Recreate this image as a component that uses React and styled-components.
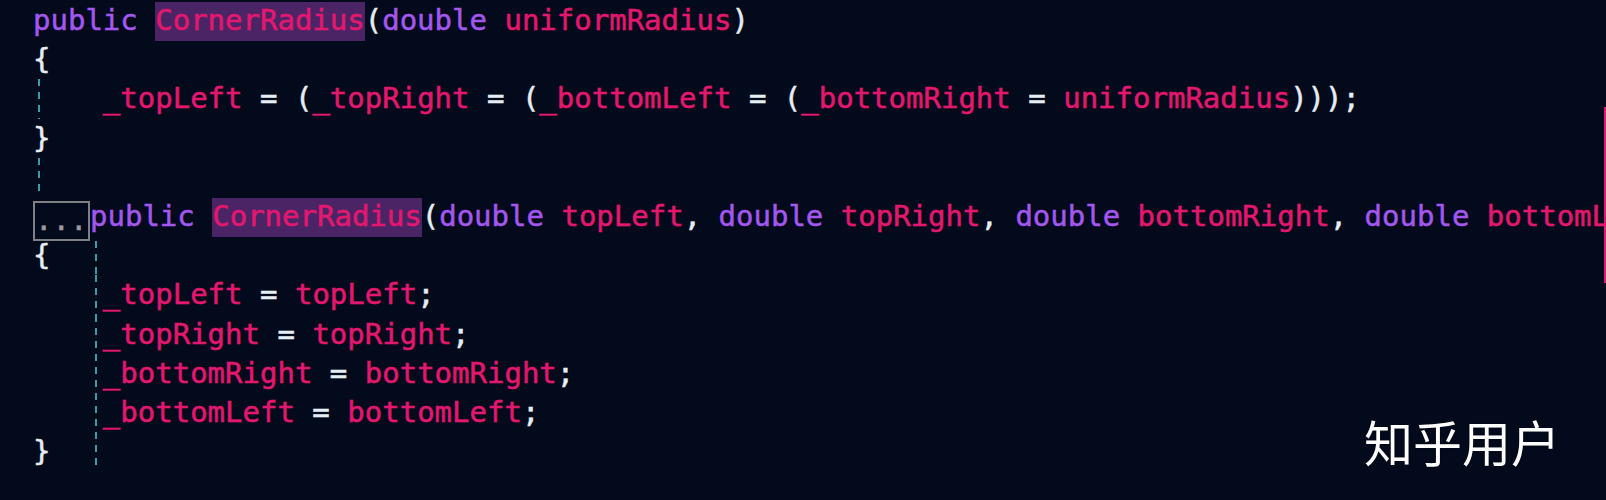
import React from "react";
import styled, { createGlobalStyle, css } from "styled-components";

const Global = createGlobalStyle`
  html, body { margin: 0; padding: 0; background: #030a1c; }
  #root { width: 1606px; height: 500px; }
`;

const LINE_H = 39.2;

const Editor = styled.div`
  position: relative;
  width: 1606px;
  height: 500px;
  overflow: hidden;
  background: #030a1c;
  box-sizing: border-box;
  padding: 1px 0 0 33px;
`;

const Code = styled.div`
  font-family: "DejaVu Sans Mono", "Liberation Mono", monospace;
  font-size: 29px;
  color: #e6eef3;
  -webkit-text-stroke: 0.5px currentColor;
`;

const guideCss = (left, top) => css`
  &::before {
    content: "";
    position: absolute;
    left: ${left}px;
    top: ${top}px;
    bottom: 0;
    width: 2px;
    background: repeating-linear-gradient(
      to bottom,
      #3a9ca8 0 7px,
      transparent 7px 13.07px
    );
  }
`;

const Line = styled.div`
  position: relative;
  height: ${LINE_H}px;
  line-height: ${LINE_H}px;
  white-space: pre;
  ${(p) => p.$guide === "outer" && guideCss(5, 0)}
  ${(p) => p.$guide === "inner" && guideCss(62, p.$guideTop || 0)}
`;

const Tok = styled.span`
  color: ${(p) =>
    p.$k === "kw" ? "#a457f0" : p.$k === "id" || p.$k === "hl" ? "#e4176f" : "#e6eef3"};
  ${(p) =>
    p.$k === "hl" &&
    css`
      background: #4b2466;
      padding: 1px 0 4px;
    `}
`;

const FoldBox = styled.span`
  display: inline-block;
  vertical-align: top;
  box-sizing: border-box;
  width: 57px;
  height: 40px;
  margin-top: 4px;
  border: 2px solid #7f7f86;
  color: #9a9aa0;
  line-height: 35px;
  overflow: hidden;
`;

const EdgeMark = styled.div`
  position: absolute;
  right: 0;
  top: 107px;
  width: 2px;
  height: 176px;
  background: #e0187a;
`;

const Watermark = styled.div`
  position: absolute;
  left: 1364px;
  top: 411px;
  font-family: "Noto Sans CJK SC", "Noto Sans", sans-serif;
  font-size: 49px;
  font-weight: 400;
  line-height: 60px;
  color: #ffffff;
  text-shadow: 0 0 2px rgba(0, 0, 0, 0.6);
`;

const lines = [
  {
    toks: [
      ["kw", "public "],
      ["hl", "CornerRadius"],
      ["p", "("],
      ["kw", "double "],
      ["id", "uniformRadius"],
      ["p", ")"],
    ],
  },
  { toks: [["p", "{"]] },
  {
    guide: "outer",
    toks: [
      ["p", "    "],
      ["id", "_topLeft"],
      ["p", " = ("],
      ["id", "_topRight"],
      ["p", " = ("],
      ["id", "_bottomLeft"],
      ["p", " = ("],
      ["id", "_bottomRight"],
      ["p", " = "],
      ["id", "uniformRadius"],
      ["p", ")));"],
    ],
  },
  { toks: [["p", "}"]] },
  { guide: "outer", toks: [["p", " "]] },
  {
    fold: true,
    toks: [
      ["kw", "public "],
      ["hl", "CornerRadius"],
      ["p", "("],
      ["kw", "double "],
      ["id", "topLeft"],
      ["p", ", "],
      ["kw", "double "],
      ["id", "topRight"],
      ["p", ", "],
      ["kw", "double "],
      ["id", "bottomRight"],
      ["p", ", "],
      ["kw", "double "],
      ["id", "bottomLeft"],
      ["p", ")"],
    ],
  },
  { guide: "inner", guideTop: 5, toks: [["p", "{"]] },
  {
    guide: "inner",
    toks: [["p", "    "], ["id", "_topLeft"], ["p", " = "], ["id", "topLeft"], ["p", ";"]],
  },
  {
    guide: "inner",
    toks: [["p", "    "], ["id", "_topRight"], ["p", " = "], ["id", "topRight"], ["p", ";"]],
  },
  {
    guide: "inner",
    toks: [
      ["p", "    "],
      ["id", "_bottomRight"],
      ["p", " = "],
      ["id", "bottomRight"],
      ["p", ";"],
    ],
  },
  {
    guide: "inner",
    toks: [
      ["p", "    "],
      ["id", "_bottomLeft"],
      ["p", " = "],
      ["id", "bottomLeft"],
      ["p", ";"],
    ],
  },
  { guide: "inner", toks: [["p", "}"]] },
];

export default function App() {
  return (
    <>
      <Global />
      <Editor>
        <Code>
          {lines.map((ln, i) => (
            <Line key={i} $guide={ln.guide} $guideTop={ln.guideTop}>
              {ln.fold && <FoldBox>...</FoldBox>}
              {ln.toks.map(([k, t], j) => (
                <Tok key={j} $k={k}>
                  {t}
                </Tok>
              ))}
            </Line>
          ))}
        </Code>
        <EdgeMark />
        <Watermark>知乎用户</Watermark>
      </Editor>
    </>
  );
}
